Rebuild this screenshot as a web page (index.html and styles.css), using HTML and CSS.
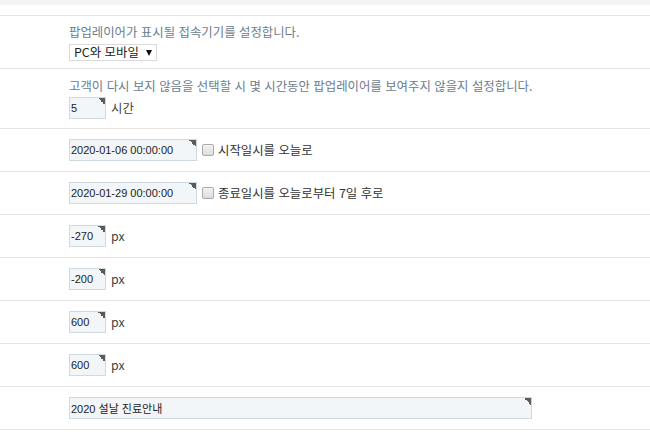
FILE: index.html
```html
<!DOCTYPE html>
<html lang="ko">
  <head>
    <meta charset="UTF-8" />
    <title>팝업레이어 설정</title>
    <link rel="stylesheet" href="styles.css">
  </head>
  <body>
    <div class="topbar"></div>

    <div class="form">
      <div class="row row-first">
        <p class="desc">팝업레이어가 표시될 접속기기를 설정합니다.</p>
        <span class="select-wrap">
          <select class="select" name="device">
            <option>PC와 모바일</option>
            <option>PC</option>
            <option>모바일</option>
          </select>
        </span>
      </div>

      <div class="row row-desc">
        <p class="desc">고객이 다시 보지 않음을 선택할 시 몇 시간동안 팝업레이어를 보여주지 않을지 설정합니다.</p>
        <div class="line">
          <input class="field field-sm" type="text" name="disable_hours" value="5" />
          <span class="unit">시간</span>
        </div>
      </div>

      <div class="row">
        <div class="line">
          <input class="field field-date" type="text" name="begin_time" value="2020-01-06 00:00:00" />
          <label class="check"><input type="checkbox" name="begin_today" /> 시작일시를 오늘로</label>
        </div>
      </div>

      <div class="row">
        <div class="line">
          <input class="field field-date" type="text" name="end_time" value="2020-01-29 00:00:00" />
          <label class="check"><input type="checkbox" name="end_7days" /> 종료일시를 오늘로부터 7일 후로</label>
        </div>
      </div>

      <div class="row">
        <div class="line">
          <input class="field field-sm" type="text" name="left" value="-270" />
          <span class="unit">px</span>
        </div>
      </div>

      <div class="row">
        <div class="line">
          <input class="field field-sm" type="text" name="top" value="-200" />
          <span class="unit">px</span>
        </div>
      </div>

      <div class="row">
        <div class="line">
          <input class="field field-sm" type="text" name="width" value="600" />
          <span class="unit">px</span>
        </div>
      </div>

      <div class="row">
        <div class="line">
          <input class="field field-sm" type="text" name="height" value="600" />
          <span class="unit">px</span>
        </div>
      </div>

      <div class="row">
        <div class="line">
          <input class="field field-wide" type="text" name="subject" value="2020 설날 진료안내" />
        </div>
      </div>

      <div class="row row-last"></div>
    </div>
  </body>
</html>
```

FILE: styles.css
```css
  body {
    margin: 0;
    background: #fff;
    color: #333;
    font-family: "Noto Sans CJK KR", "Liberation Sans", sans-serif;
    font-size: 12px;
  }

  .topbar {
    height: 5px;
    background: #f4f4f4;
  }

  .form {
    margin-top: 10px;
  }

  .row {
    border-top: 1px solid #e6e6e6;
    padding: 10px 0 10px 69px;
  }

  .row-first {
    padding-top: 8px;
    padding-bottom: 7px;
  }

  .row-desc {
    padding-top: 9px;
    padding-bottom: 9px;
  }
  .row-desc .desc {
    margin-bottom: 2px;
  }

  .row-last {
    padding: 0;
    height: 18px;
  }

  .desc {
    margin: 0 0 3px;
    color: #6b7c8c;
    font-size: 12.4px;
    line-height: 17px;
  }

  .line {
    display: flex;
    align-items: center;
    gap: 5px;
    height: 22px;
  }

  /* select box with the small black arrow */
  .select-wrap {
    position: relative;
    display: block;
    width: 88px;
    height: 17px;
  }
  .select-wrap::after {
    content: "";
    position: absolute;
    right: 5px;
    top: 6px;
    border-left: 3.5px solid transparent;
    border-right: 3.5px solid transparent;
    border-top: 6px solid #111;
  }
  .select {
    appearance: none;
    -webkit-appearance: none;
    display: block;
    width: 88px;
    height: 17px;
    margin: 0;
    padding: 0 0 0 4px;
    border: 1px solid #dadada;
    border-radius: 0;
    background: #fff;
    color: #222;
    font-family: "Noto Sans CJK KR", sans-serif;
    font-size: 12.4px;
    line-height: 15px;
  }

  .field {
    box-sizing: border-box;
    height: 22px;
    margin: 0;
    padding: 0 1px;
    border: 1px solid #cfd9e0;
    border-radius: 0;
    background:
      linear-gradient(to bottom left, #5b5b5b 50%, transparent 50%) top right / 7px 7px no-repeat,
      #f3f6f8;
    color: #222;
    font-family: "Liberation Sans", "Noto Sans CJK KR", sans-serif;
    font-size: 11px;
    outline: none;
  }
  .field-sm {
    width: 37px;
  }
  .field-date {
    width: 128px;
  }
  .field-wide {
    width: 463px;
  }

  .unit {
    color: #444;
    font-size: 12.4px;
  }

  .check {
    display: flex;
    align-items: center;
    gap: 4px;
    color: #333;
    font-size: 12.4px;
  }
  .check input {
    appearance: none;
    -webkit-appearance: none;
    width: 12px;
    height: 12px;
    margin: 0;
    border: 1px solid #a9a9a9;
    border-radius: 2px;
    background: linear-gradient(#f4f4f4, #dcdcdc);
  }
```
